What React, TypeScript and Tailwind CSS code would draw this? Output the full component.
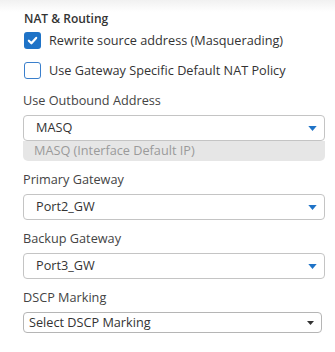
function Caret({ className }: { className: string }) {
  return (
    <svg viewBox="0 0 10 6" className={className} aria-hidden>
      <path d="M0 0H10L5 6Z" fill="currentColor" />
    </svg>
  );
}

function CheckRow({ checked, label }: { checked?: boolean; label: string }) {
  return (
    <label className="flex h-[17px] items-center gap-2">
      <span
        className={
          checked
            ? "flex h-[17px] w-[17px] items-center justify-center rounded-[3px] bg-[#1f73c7]"
            : "h-[17px] w-[17px] rounded-[3px] border-[1.5px] border-[#3a7fcc] bg-white"
        }
      >
        {checked && (
          <svg viewBox="0 0 12 12" className="h-[11px] w-[11px]" aria-hidden>
            <path
              d="M2 6.2L4.8 9L10 3.2"
              fill="none"
              stroke="white"
              strokeWidth="2.4"
              strokeLinecap="round"
              strokeLinejoin="round"
            />
          </svg>
        )}
      </span>
      <span className="text-[12.7px] text-[#333]">{label}</span>
    </label>
  );
}

function Select({ value }: { value: string }) {
  return (
    <div className="flex h-[26px] items-center justify-between rounded-[4px] border border-[#c4c4c4] bg-white pl-[12px] pr-[7px] text-[12.7px] text-[#333]">
      <span>{value}</span>
      <Caret className="h-[5px] w-[9px] text-[#1f73c7]" />
    </div>
  );
}

function Field({ label, children }: { label: string; children: React.ReactNode }) {
  return (
    <div className="flex flex-col gap-[7px]">
      <span className="text-[12.7px] leading-[16px] text-[#444]">{label}</span>
      {children}
    </div>
  );
}

export default function App() {
  return (
    <div
      className="h-[352px] w-[335px] bg-white bg-gradient-to-b from-[#f1f1f1] to-white to-[12px] pl-[23px] pr-[10px] pt-[12px]"
      style={{ fontFamily: '"Open Sans", "Noto Sans", sans-serif' }}
    >
      <div className="pl-[1px] text-[12px] font-semibold leading-[14px] text-[#333]">
        NAT &amp; Routing
      </div>

      <div className="mt-[6px] flex flex-col gap-[13px] pl-[1px]">
        <CheckRow checked label="Rewrite source address (Masquerading)" />
        <CheckRow label="Use Gateway Specific Default NAT Policy" />
      </div>

      <div className="mt-[13px] flex flex-col gap-[10px]">
        <Field label="Use Outbound Address">
          <div className="flex flex-col">
            <Select value="MASQ" />
            <div className="flex h-[20px] items-center rounded-b-[5px] bg-[#e6e6e6] pl-[11px] text-[12.7px] text-[#9a9a9a]">
              MASQ (Interface Default IP)
            </div>
          </div>
        </Field>

        <Field label="Primary Gateway">
          <Select value="Port2_GW" />
        </Field>

        <Field label="Backup Gateway">
          <Select value="Port3_GW" />
        </Field>

        <Field label="DSCP Marking">
          <div className="mr-[3px] flex h-[21px] items-center justify-between rounded-[4px] border border-[#b5b5b5] bg-white pl-[5px] pr-[7px] text-[12.7px] text-[#333]">
            <span>Select DSCP Marking</span>
            <Caret className="h-[6px] w-[7px] text-[#333]" />
          </div>
        </Field>
      </div>
    </div>
  );
}
